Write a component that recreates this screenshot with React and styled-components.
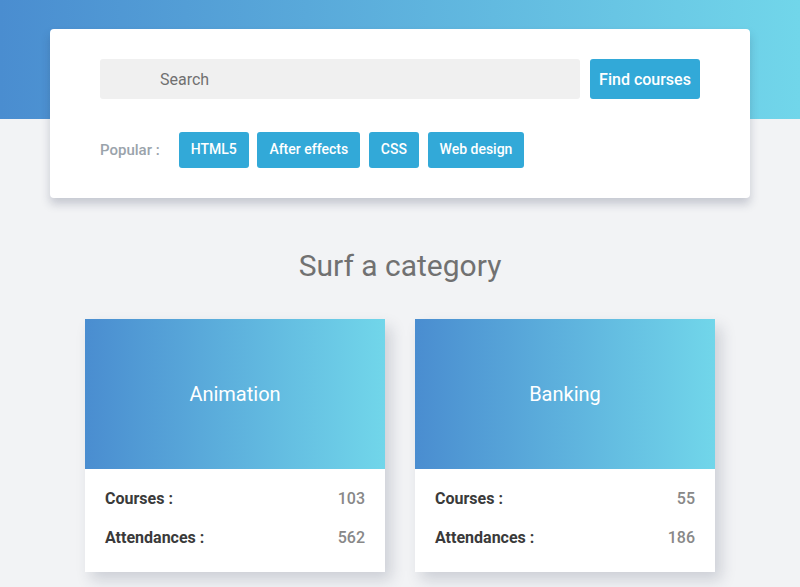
import React from "react";
import styled, { createGlobalStyle } from "styled-components";

const GlobalStyle = createGlobalStyle`
  html, body {
    margin: 0;
    padding: 0;
    background: #f2f3f5;
    font-family: Roboto, "Liberation Sans", sans-serif;
  }
  * { box-sizing: border-box; }
`;

const Page = styled.div`
  width: 800px;
  min-height: 587px;
  overflow: hidden;
  background: #f2f3f5;
`;

const Hero = styled.div`
  height: 119px;
  background: linear-gradient(90deg, #4a8dd0 0%, #71d6ea 100%);
  padding-top: 29px;
`;

const SearchBox = styled.div`
  width: 700px;
  height: 169px;
  margin: 0 auto;
  background: #fff;
  border-radius: 4px;
  box-shadow: 0 6px 10px rgba(40, 50, 80, 0.22);
  padding: 30px 50px 0;
`;

const SearchRow = styled.div`
  display: flex;
  gap: 10px;
`;

const Input = styled.input`
  flex: 1;
  height: 40px;
  border: none;
  outline: none;
  border-radius: 3px;
  background: #f0f0f0;
  padding-left: 60px;
  font-family: inherit;
  font-size: 16px;
  color: #555;
  &::placeholder {
    color: #707070;
  }
`;

const FindButton = styled.button`
  width: 110px;
  height: 40px;
  border: none;
  border-radius: 3px;
  background: #32a9d8;
  color: #fff;
  font-family: inherit;
  font-size: 16px;
  font-weight: 500;
  padding: 0;
`;

const PopularRow = styled.div`
  display: flex;
  align-items: center;
  margin-top: 33px;
`;

const PopularLabel = styled.span`
  color: #9aa3ab;
  font-size: 15px;
  font-weight: 500;
  margin-right: 19px;
`;

const Tags = styled.div`
  display: flex;
  gap: 8.7px;
`;

const Tag = styled.button`
  height: 36px;
  border: none;
  border-radius: 3px;
  background: #32a9d8;
  color: #fff;
  font-family: inherit;
  font-size: 14px;
  font-weight: 500;
  padding: 0 12px 2px;
`;

const Title = styled.h2`
  margin: 129px 0 0;
  text-align: center;
  font-size: 30px;
  font-weight: 400;
  color: #717171;
  line-height: 36px;
`;

const Grid = styled.div`
  display: flex;
  gap: 30px;
  padding-left: 85px;
  margin-top: 35px;
`;

const Card = styled.div`
  width: 300px;
  background: #fff;
  box-shadow: 6px 8px 14px rgba(40, 50, 80, 0.18);
`;

const CardHead = styled.div`
  height: 150px;
  display: flex;
  align-items: center;
  justify-content: center;
  background: linear-gradient(90deg, #4a8dd0 0%, #71d6ea 100%);
  color: #fff;
  font-size: 20px;
  font-weight: 400;
`;

const CardBody = styled.div`
  padding: 20px 20px 25px;
  display: flex;
  flex-direction: column;
  gap: 20px;
`;

const StatRow = styled.div`
  display: flex;
  justify-content: space-between;
  font-size: 16px;
  line-height: 19px;
`;

const StatLabel = styled.span`
  color: #3a3a3a;
  font-weight: 700;
`;

const StatValue = styled.span`
  color: #888;
  font-weight: 500;
`;

const categories = [
  { name: "Animation", courses: 103, attendances: 562 },
  { name: "Banking", courses: 55, attendances: 186 },
];

const popular = ["HTML5", "After effects", "CSS", "Web design"];

export default function App() {
  return (
    <Page>
      <GlobalStyle />
      <Hero>
        <SearchBox>
          <SearchRow>
            <Input placeholder="Search" />
            <FindButton>Find courses</FindButton>
          </SearchRow>
          <PopularRow>
            <PopularLabel>Popular :</PopularLabel>
            <Tags>
              {popular.map((p) => (
                <Tag key={p}>{p}</Tag>
              ))}
            </Tags>
          </PopularRow>
        </SearchBox>
      </Hero>
      <section>
        <Title>Surf a category</Title>
        <Grid>
          {categories.map((c) => (
            <Card key={c.name}>
              <CardHead>{c.name}</CardHead>
              <CardBody>
                <StatRow>
                  <StatLabel>Courses :</StatLabel>
                  <StatValue>{c.courses}</StatValue>
                </StatRow>
                <StatRow>
                  <StatLabel>Attendances :</StatLabel>
                  <StatValue>{c.attendances}</StatValue>
                </StatRow>
              </CardBody>
            </Card>
          ))}
        </Grid>
      </section>
    </Page>
  );
}
